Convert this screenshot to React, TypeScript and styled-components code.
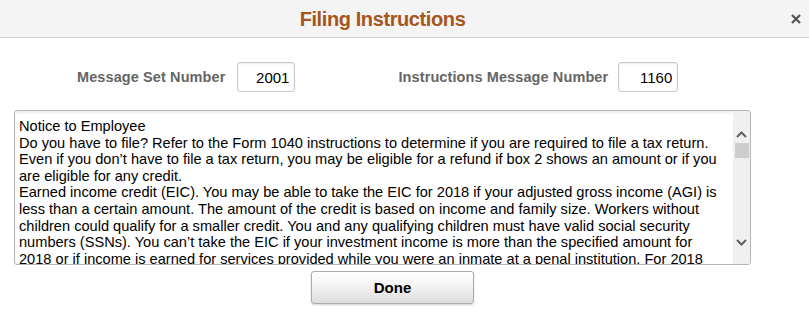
import React from 'react'
import styled, { createGlobalStyle } from 'styled-components'

//Global
const GlobalStyle = createGlobalStyle`
  html, body {
    margin: 0;
    padding: 0;
    background: #ffffff;
  }
  body {
    font-family: 'Liberation Sans', Arial, sans-serif;
    color: #000000;
  }
`

//Styled Components
const Dialog = styled.div`
  width: 809px;
  height: 313px;
  display: flex;
  flex-direction: column;
  background: #ffffff;
  overflow: hidden;
`

const Header = styled.header`
  height: 37px;
  flex-shrink: 0;
  display: grid;
  grid-template-columns: 1fr auto 1fr;
  align-items: center;
  background: #f4f4f4;
  border-bottom: 1px solid #d2d2d2;
`

const Title = styled.h1`
  grid-column: 2;
  margin: 0 44px 0 0;
  padding-top: 1px;
  font-size: 20px;
  font-weight: 700;
  color: #a5561c;
  letter-spacing: -0.4px;
`

const CloseButton = styled.button`
  grid-column: 3;
  justify-self: end;
  width: 20px;
  height: 20px;
  margin-right: 3px;
  padding: 0;
  display: flex;
  align-items: center;
  justify-content: center;
  background: transparent;
  border: none;
  cursor: pointer;
`

const FieldRow = styled.div`
  display: flex;
  align-items: center;
  gap: 103px;
  padding: 24px 0 0 77px;
  height: 30px;
`

const Field = styled.label<{ $gap: number }>`
  display: flex;
  align-items: center;
  gap: ${(props) => props.$gap}px;
`

const LabelText = styled.span`
  font-size: 14.5px;
  font-weight: 700;
  color: #656565;
  letter-spacing: 0.1px;
`

const NumberInput = styled.input<{ $width: number }>`
  box-sizing: border-box;
  width: ${(props) => props.$width}px;
  height: 30px;
  padding: 0 5px 0 4px;
  border: 1px solid #c8c8c8;
  border-radius: 3px;
  box-shadow: inset 0 1px 2px rgba(0, 0, 0, 0.08);
  font-family: 'Liberation Sans', Arial, sans-serif;
  font-size: 15px;
  text-align: right;
  color: #000000;
  background: #ffffff;
  outline: none;
`

const TextBox = styled.div`
  box-sizing: border-box;
  margin: 18px 0 0 14px;
  width: 737px;
  height: 155px;
  display: flex;
  border: 1px solid #b4b4b4;
  border-radius: 3px;
  box-shadow: inset 0 2px 3px rgba(0, 0, 0, 0.08);
  overflow: hidden;
`

const NoticeText = styled.textarea`
  flex: 1;
  margin: 0;
  padding: 7px 7px 0 4px;
  border: none;
  background: transparent;
  resize: none;
  outline: none;
  overflow: hidden;
  scrollbar-width: none;
  font-family: 'Liberation Sans', Arial, sans-serif;
  font-size: 14.6px;
  line-height: 16.6px;
  color: #000000;
`

const ScrollRail = styled.div`
  width: 17px;
  flex-shrink: 0;
  display: flex;
  flex-direction: column;
  align-items: center;
  background: #f0f0f0;
`

const ArrowButton = styled.div`
  width: 17px;
  height: 17px;
  flex-shrink: 0;
  display: flex;
  align-items: center;
  justify-content: center;
`

const Thumb = styled.div`
  width: 14px;
  height: 15px;
  background: #cdcdcd;
`

const RailSpace = styled.div`
  flex: 1;
`

const Footer = styled.div`
  padding: 6px 0 0 311px;
`

const DoneButton = styled.button`
  box-sizing: border-box;
  width: 163px;
  height: 33px;
  border: 1px solid #ababab;
  border-radius: 3px;
  background: linear-gradient(to bottom, #ffffff 0%, #f3f3f3 45%, #dcdcdc 100%);
  box-shadow: 0 1px 2px rgba(0, 0, 0, 0.18);
  font-family: 'Liberation Sans', Arial, sans-serif;
  font-size: 15px;
  font-weight: 700;
  color: #000000;
  cursor: pointer;
`

const NOTICE = `Notice to Employee
Do you have to file? Refer to the Form 1040 instructions to determine if you are required to file a tax return. Even if you don\u2019t have to file a tax return, you may be eligible for a refund if box 2 shows an amount or if you are eligible for any credit.
Earned income credit (EIC). You may be able to take the EIC for 2018 if your adjusted gross income (AGI) is less than a certain amount. The amount of the credit is based on income and family size. Workers without children could qualify for a smaller credit. You and any qualifying children must have valid social security numbers (SSNs). You can\u2019t take the EIC if your investment income is more than the specified amount for 2018 or if income is earned for services provided while you were an inmate at a penal institution. For 2018 income limits and more information, visit www.irs.gov/EITC. Also see Pub. 596, Earned Income Credit. Any EIC that is more than your tax liability is refunded to you, but only if you file a tax return.
Clergy and religious workers. If you aren\u2019t subject to social security and Medicare taxes, see Pub. 517, Social Security and Other Information for Members of the Clergy and Religious Workers.`

//React Component
const App: React.FC = () => {
  return (
    <>
      <GlobalStyle />
      <Dialog role="dialog" aria-label="Filing Instructions">
        <Header>
          <Title>Filing Instructions</Title>
          <CloseButton aria-label="Close">
            <svg width="10" height="10" viewBox="0 0 10 10">
              <path d="M1 1 L9 9 M9 1 L1 9" stroke="#555555" strokeWidth="2.2" />
            </svg>
          </CloseButton>
        </Header>

        <FieldRow>
          <Field $gap={12}>
            <LabelText>Message Set Number</LabelText>
            <NumberInput $width={58} value="2001" readOnly />
          </Field>
          <Field $gap={10}>
            <LabelText>Instructions Message Number</LabelText>
            <NumberInput $width={60} value="1160" readOnly />
          </Field>
        </FieldRow>

        <TextBox>
          <NoticeText value={NOTICE} readOnly />
          <ScrollRail aria-hidden="true">
            <ArrowButton style={{ marginTop: 15 }}>
              <svg width="11" height="7" viewBox="0 0 11 7">
                <path d="M1 6 L5.5 1.5 L10 6" fill="none" stroke="#606060" strokeWidth="2" />
              </svg>
            </ArrowButton>
            <Thumb />
            <RailSpace />
            <ArrowButton style={{ marginBottom: 13 }}>
              <svg width="11" height="7" viewBox="0 0 11 7">
                <path d="M1 1 L5.5 5.5 L10 1" fill="none" stroke="#606060" strokeWidth="2" />
              </svg>
            </ArrowButton>
          </ScrollRail>
        </TextBox>

        <Footer>
          <DoneButton>Done</DoneButton>
        </Footer>
      </Dialog>
    </>
  )
}
export default App
